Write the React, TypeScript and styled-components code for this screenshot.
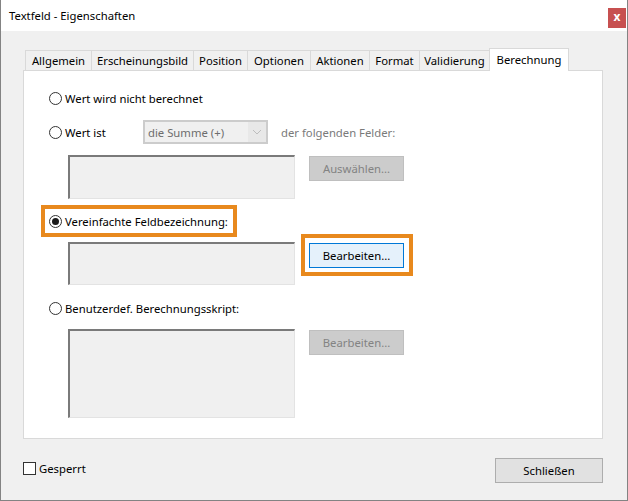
import React from "react";
import styled, { createGlobalStyle } from "styled-components";

const GlobalStyle = createGlobalStyle`
  html, body {
    margin: 0;
    padding: 0;
    background: #f0f0f0;
  }
  * {
    box-sizing: border-box;
  }
`;

const Window = styled.div`
  width: 628px;
  height: 501px;
  display: flex;
  flex-direction: column;
  border: 1px solid #838383;
  border-top: none;
  background: #f0f0f0;
  font-family: "Noto Sans", "Liberation Sans", sans-serif;
  font-size: 11.3px;
  color: #000;
`;

const TitleBar = styled.div`
  height: 31px;
  flex: none;
  display: flex;
  align-items: center;
  justify-content: space-between;
  background: #fff;
  padding: 0 1px 0 8px;
`;

const Title = styled.span`
  margin-top: -1px;
`;

const CloseButton = styled.div`
  width: 18px;
  height: 20px;
  margin-top: 4px;
  background: #c75050;
  color: #fff;
  font-weight: bold;
  font-size: 12px;
  line-height: 17px;
  text-align: center;
`;

const Body = styled.div`
  flex: 1;
  display: flex;
  flex-direction: column;
  padding: 17px 24px 0 22px;
`;

const TabBar = styled.div`
  display: flex;
  align-items: flex-end;
  height: 22px;
  padding-left: 2px;
  position: relative;
  z-index: 1;
`;

const Tab = styled.div<{ $w: number; $active?: boolean }>`
  width: ${(p) => p.$w}px;
  height: ${(p) => (p.$active ? 23 : 20)}px;
  margin-left: -1px;
  margin-bottom: ${(p) => (p.$active ? -1 : 0)}px;
  border: 1px solid #d9d9d9;
  border-bottom: none;
  background: ${(p) => (p.$active ? "#fff" : "#f0f0f0")};
  display: flex;
  align-items: center;
  justify-content: center;
  padding-bottom: ${(p) => (p.$active ? 2 : 0)}px;
  white-space: nowrap;
  &:first-child {
    margin-left: 0;
  }
`;

const Panel = styled.div`
  height: 369px;
  flex: none;
  background: #fff;
  border: 1px solid #d9d9d9;
  padding: 19px 0 0 25px;
  display: flex;
  flex-direction: column;
  align-items: flex-start;
`;

const RadioRow = styled.label<{ $mt?: number }>`
  display: flex;
  align-items: center;
  height: 16px;
  margin-top: ${(p) => p.$mt ?? 0}px;
  white-space: nowrap;
`;

const RadioCircle = styled.span<{ $checked?: boolean }>`
  width: 13px;
  height: 13px;
  flex: none;
  border: 1px solid #333;
  border-radius: 50%;
  background: #fff;
  margin-right: 3px;
  display: flex;
  align-items: center;
  justify-content: center;
  &::after {
    content: "";
    display: ${(p) => (p.$checked ? "block" : "none")};
    width: 7px;
    height: 7px;
    border-radius: 50%;
    background: #1a1a1a;
  }
`;

const ValueRow = styled.div`
  display: flex;
  align-items: center;
  height: 24px;
  margin-top: 14px;
`;

const ValueLabel = styled.span`
  width: 78px;
`;

const Select = styled.div`
  width: 125px;
  height: 24px;
  display: flex;
  align-items: stretch;
  border: 1px solid #cccccc;
  background: #cccccc;
  padding: 1px;
`;

const SelectValue = styled.div`
  flex: 1;
  background: #f0f0f0;
  color: #6d6d6d;
  padding-left: 3px;
  display: flex;
  align-items: center;
`;

const SelectArrow = styled.div`
  width: 18px;
  background: #e8e8e8;
  display: flex;
  align-items: center;
  justify-content: center;
`;

const MutedText = styled.span`
  color: #7a7a7a;
  margin-left: 13px;
`;

const FieldRow = styled.div<{ $mt: number }>`
  display: flex;
  align-items: flex-start;
  margin-top: ${(p) => p.$mt}px;
  margin-left: 19px;
`;

const FieldBox = styled.div<{ $h: number }>`
  width: 227px;
  height: ${(p) => p.$h}px;
  background: #f0f0f0;
  border-top: 2px solid #7a7a7a;
  border-left: 2px solid #7a7a7a;
  border-right: 1px solid #e3e3e3;
  border-bottom: 1px solid #e3e3e3;
  margin-right: 14px;
`;

const Button = styled.div<{ $state: "disabled" | "focused" | "normal"; $w?: number }>`
  width: ${(p) => p.$w ?? 95}px;
  height: 25px;
  margin-top: 1px;
  display: flex;
  align-items: center;
  justify-content: center;
  white-space: nowrap;
  border: 1px solid
    ${(p) =>
      p.$state === "disabled" ? "#bfbfbf" : p.$state === "focused" ? "#0078d7" : "#adadad"};
  background: ${(p) =>
    p.$state === "disabled" ? "#cccccc" : p.$state === "focused" ? "#e5f1fb" : "#e1e1e1"};
  color: ${(p) => (p.$state === "disabled" ? "#838383" : "#000")};
`;

const Highlight = styled.div<{ $mt?: number }>`
  display: flex;
  align-items: flex-start;
  width: fit-content;
  margin: ${(p) => -8 + (p.$mt ?? 0)}px -8px -8px -8px;
  padding: 4px 5px 4px 4px;
  border: 4px solid #e8891d;
  background: #fff;
`;

const Footer = styled.div`
  display: flex;
  align-items: center;
  justify-content: space-between;
  margin-top: 18px;
  height: 25px;
`;

const CheckLabel = styled.label`
  display: flex;
  align-items: center;
  margin-top: -2px;
`;

const CheckBox = styled.span`
  width: 13px;
  height: 13px;
  border: 1px solid #333;
  background: #fff;
  margin-right: 3px;
`;

const Chevron = () => (
  <svg width="10" height="6" viewBox="0 0 10 6">
    <path d="M1 1 L5 5 L9 1" fill="none" stroke="#bdbdbd" strokeWidth="1" />
  </svg>
);

const tabs: [string, number][] = [
  ["Allgemein", 67],
  ["Erscheinungsbild", 103],
  ["Position", 55],
  ["Optionen", 64],
  ["Aktionen", 60],
  ["Format", 51],
  ["Validierung", 71],
  ["Berechnung", 80],
];

export default function App() {
  return (
    <>
      <GlobalStyle />
      <Window>
        <TitleBar>
          <Title>Textfeld - Eigenschaften</Title>
          <CloseButton>x</CloseButton>
        </TitleBar>
        <Body>
          <TabBar>
            {tabs.map(([name, w]) => (
              <Tab key={name} $w={w} $active={name === "Berechnung"}>
                {name}
              </Tab>
            ))}
          </TabBar>
          <Panel>
            <RadioRow>
              <RadioCircle />
              Wert wird nicht berechnet
            </RadioRow>
            <ValueRow>
              <RadioCircle />
              <ValueLabel>Wert ist</ValueLabel>
              <Select>
                <SelectValue>die Summe (+)</SelectValue>
                <SelectArrow>
                  <Chevron />
                </SelectArrow>
              </Select>
              <MutedText>der folgenden Felder:</MutedText>
            </ValueRow>
            <FieldRow $mt={11}>
              <FieldBox $h={44} />
              <Button $state="disabled">Auswählen...</Button>
            </FieldRow>
            <Highlight $mt={14}>
              <RadioRow>
                <RadioCircle $checked />
                Vereinfachte Feldbezeichnung:
              </RadioRow>
            </Highlight>
            <FieldRow $mt={13}>
              <FieldBox $h={43} />
              <Highlight>
                <Button $state="focused">Bearbeiten...</Button>
              </Highlight>
            </FieldRow>
            <RadioRow $mt={15}>
              <RadioCircle />
              Benutzerdef. Berechnungsskript:
            </RadioRow>
            <FieldRow $mt={13}>
              <FieldBox $h={89} />
              <Button $state="disabled">Bearbeiten...</Button>
            </FieldRow>
          </Panel>
          <Footer>
            <CheckLabel>
              <CheckBox />
              Gesperrt
            </CheckLabel>
            <Button $state="normal" $w={108}>
              Schließen
            </Button>
          </Footer>
        </Body>
      </Window>
    </>
  );
}
